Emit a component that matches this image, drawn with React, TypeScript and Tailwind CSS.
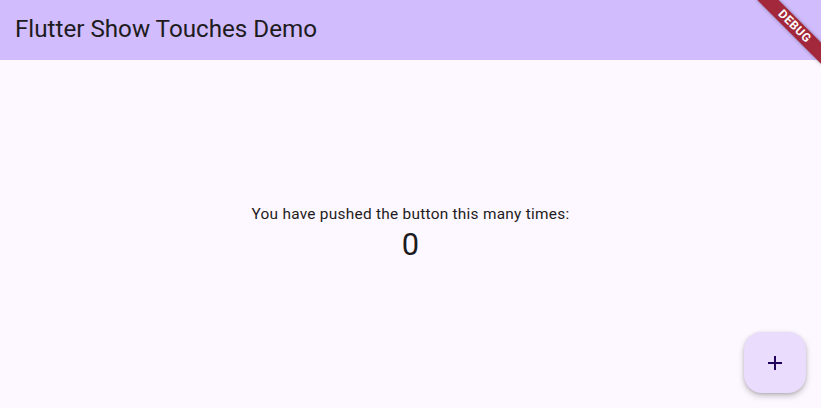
import React from "react";

export default function App() {
  return (
    <div
      className="relative w-[821px] h-[408px] overflow-hidden bg-[#fdf7ff] flex flex-col"
      style={{ fontFamily: "Roboto, 'Noto Sans', sans-serif" }}
    >
      <header className="h-[60px] shrink-0 bg-[#d1bcfd] flex items-center pl-[15px]">
        <h1 className="text-[24.2px] leading-[28px] text-[#1d1b20] font-normal mt-[-2px]">
          Flutter Show Touches Demo
        </h1>
      </header>
      <main className="flex-1 flex flex-col items-center justify-center">
        <p className="text-[15.4px] leading-[22px] tracking-[0.27px] text-[#1d1b20]">
          You have pushed the button this many times:
        </p>
        <p className="text-[30.8px] leading-[40px] text-[#1d1b20]">0</p>
      </main>
      <button className="absolute right-[15px] bottom-[15px] w-[62px] h-[61px] rounded-[18px] bg-[#eadcfd] flex items-center justify-center shadow-[0_3px_6px_rgba(0,0,0,0.22),0_1px_3px_rgba(0,0,0,0.12)]">
        <svg width="16" height="16" viewBox="0 0 16 16">
          <path d="M8 1V15M1 8H15" stroke="#21005d" strokeWidth="2" />
        </svg>
      </button>
      <div className="absolute top-0 right-0 w-0 h-0 rotate-45">
        <div className="absolute left-[-46px] top-[30px] w-[92px] h-[14.5px] bg-[#a3283c] flex items-center justify-center shadow-[0_0_4px_rgba(0,0,0,0.35)]">
          <span className="text-white font-bold text-[12px] leading-none tracking-[0.5px]">
            DEBUG
          </span>
        </div>
      </div>
    </div>
  );
}
